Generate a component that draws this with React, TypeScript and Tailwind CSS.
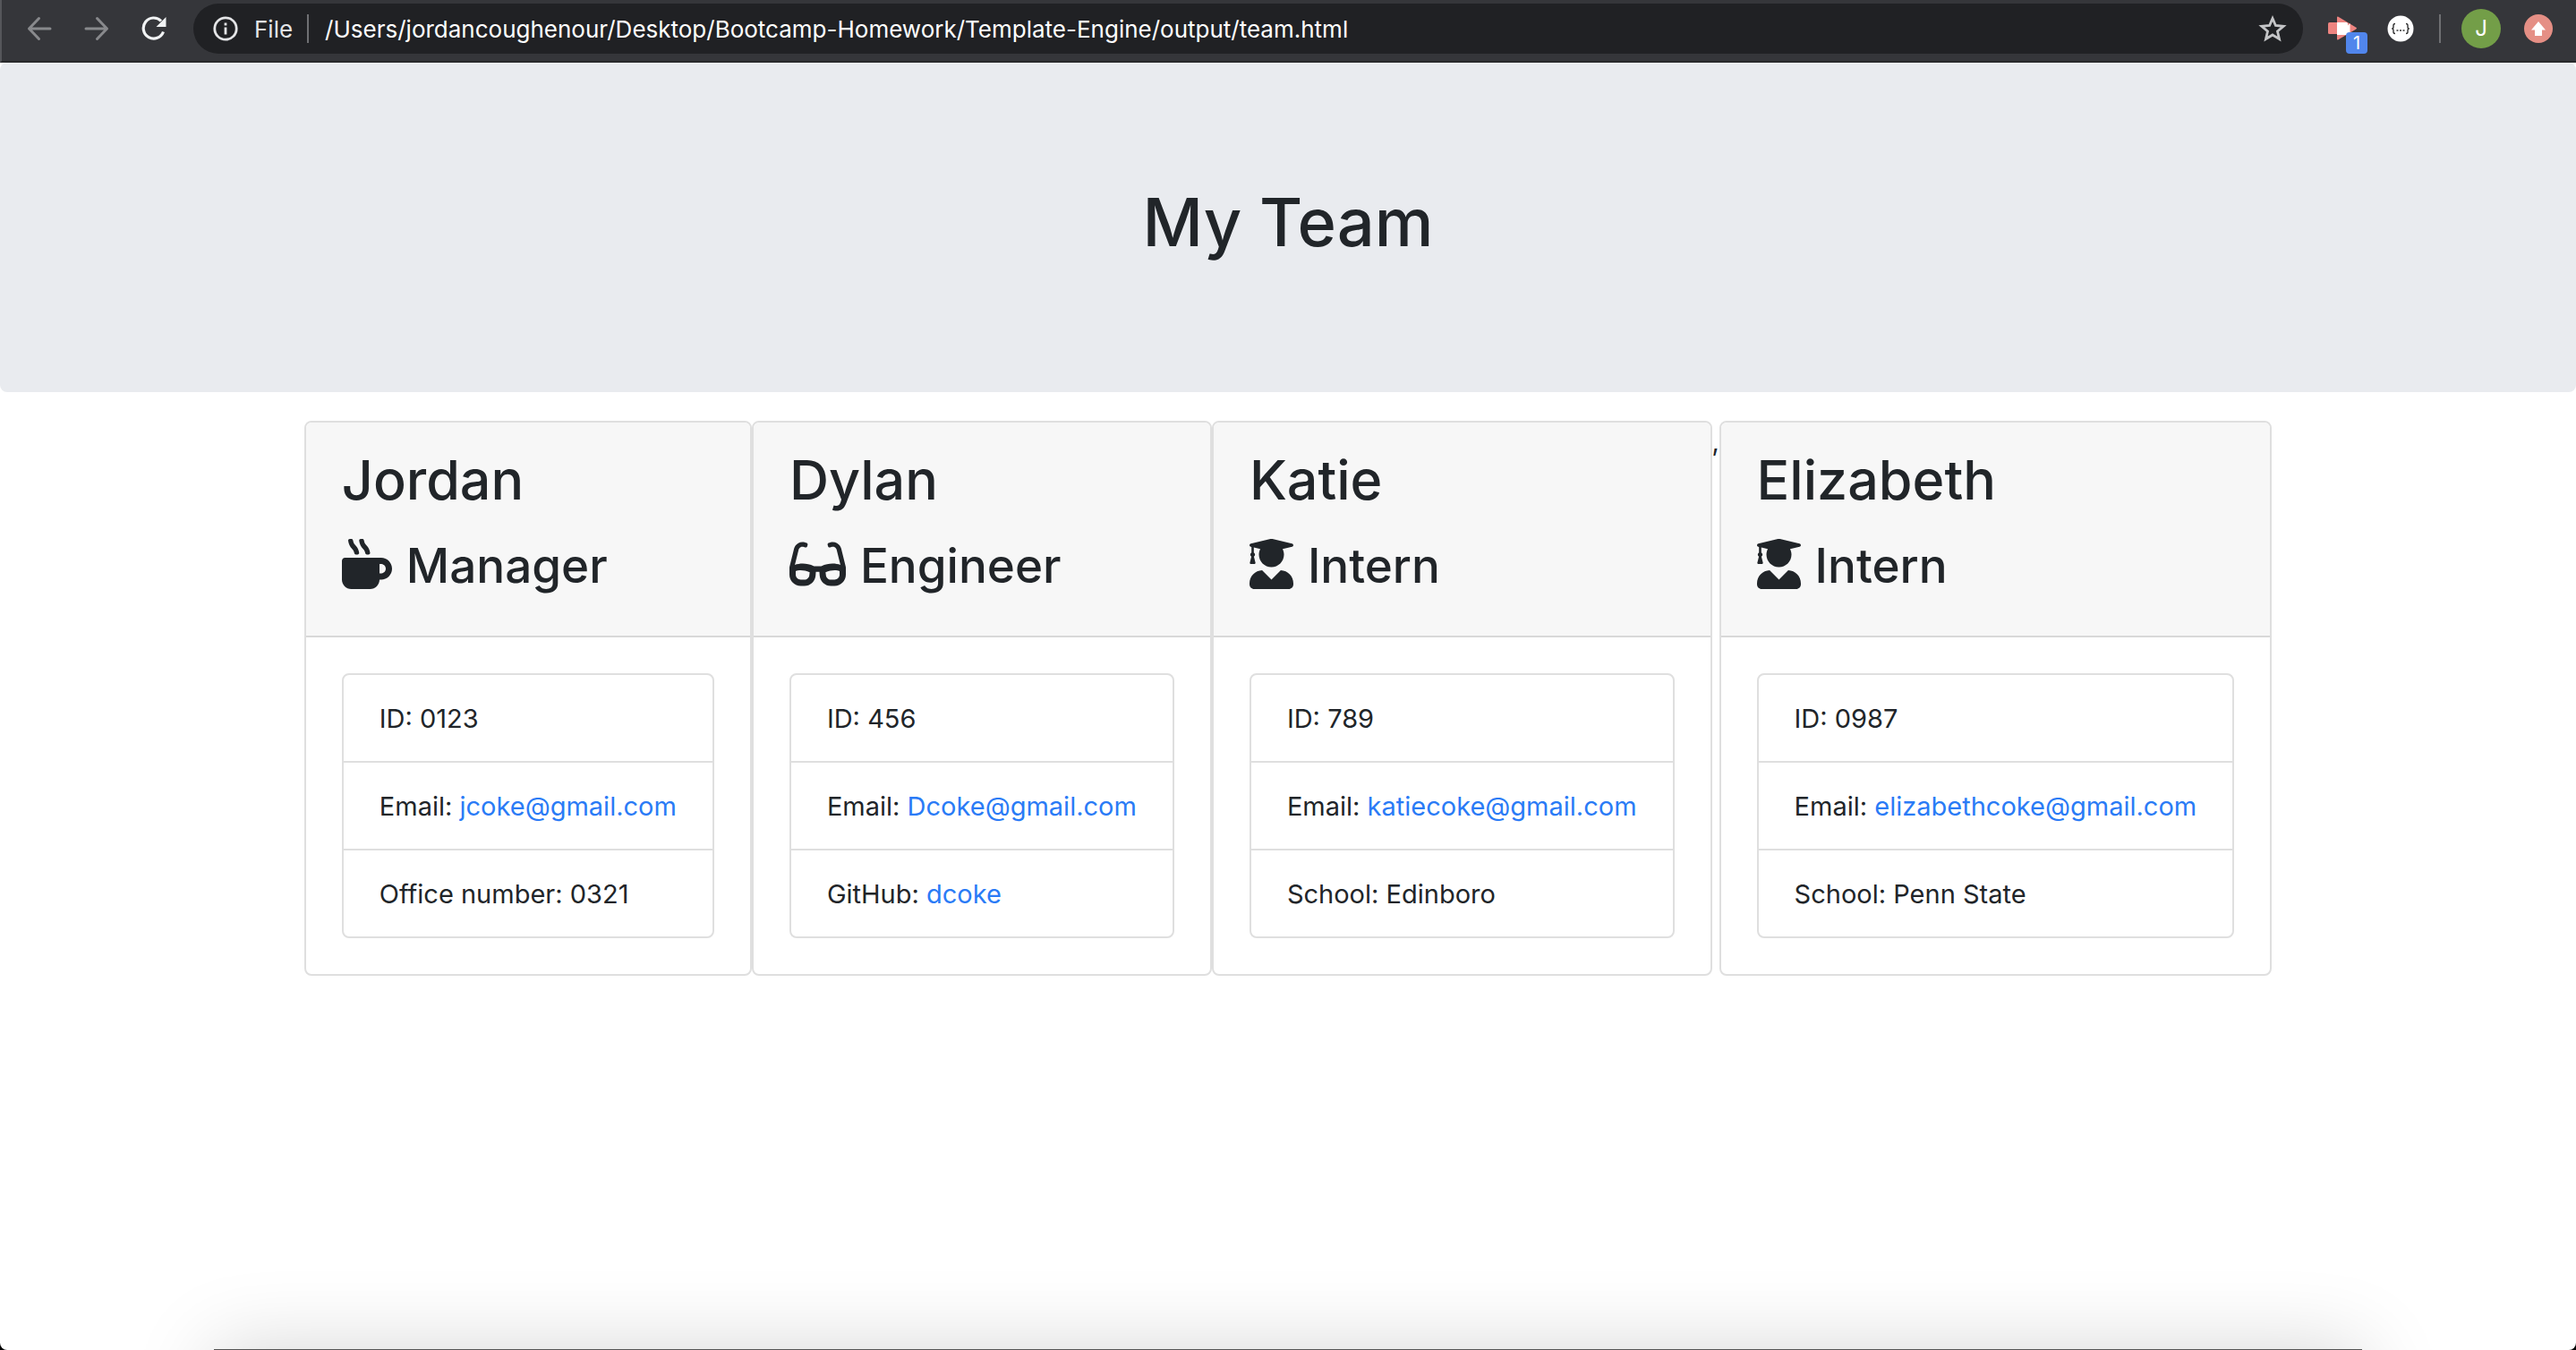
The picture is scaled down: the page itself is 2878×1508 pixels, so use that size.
import type { ReactNode } from "react";
import { FaMugHot, FaUserGraduate } from "react-icons/fa";

type Detail = { label: string; value: string; href?: string };
type Member = {
  name: string;
  role: string;
  icon: ReactNode;
  width: string;
  details: Detail[];
};

function Glasses() {
  return (
    <svg viewBox="0 0 576 512" className="mb-1 h-14 w-[63px] shrink-0" fill="currentColor" aria-hidden="true">
      <path d="M574.1 280.37L528.75 98.66c-5.91-23.7-21.59-44.05-43-55.81-21.44-11.73-46.97-14.11-70.19-6.33l-15.25 5.08c-8.39 2.79-12.92 11.86-10.12 20.24l5.06 15.18c2.79 8.38 11.85 12.91 20.23 10.12l13.18-4.39c10.87-3.62 23-3.57 33.16 1.73 10.29 5.37 17.57 14.56 20.37 25.82l38.46 153.82c-22.19-6.81-49.79-12.46-81.2-12.46-34.77 0-73.98 7.02-114.85 26.74h-73.18c-40.87-19.74-80.08-26.75-114.86-26.75-31.42 0-59.02 5.65-81.21 12.46l38.46-153.83c2.79-11.25 10.09-20.45 20.38-25.81 10.16-5.3 22.28-5.35 33.15-1.73l13.17 4.39c8.38 2.79 17.44-1.74 20.23-10.12l5.06-15.18c2.8-8.38-1.73-17.45-10.12-20.24l-15.25-5.08c-23.22-7.78-48.75-5.41-70.19 6.33-21.41 11.77-37.09 32.11-43 55.81L1.9 280.37A64.218 64.218 0 0 0 0 295.86v70.25C0 429.01 51.58 480 115.2 480h37.12c60.28 0 110.37-45.94 114.88-105.37l2.93-38.63h35.75l2.93 38.63C313.31 434.06 363.4 480 423.68 480h37.12c63.62 0 115.2-50.99 115.2-113.88v-70.25c0-5.23-.64-10.43-1.9-15.5zM203.400 369.800c-1.970 25.910-24.400 46.200-51.080 46.200H115.200C86.970 416 64 393.620 64 366.110v-37.540c12.120-4.310 29.630-8.570 51.500-8.570 29.520 0 60.400 7.500 91.500 20.500zm308.600-3.690c0 27.510-22.970 49.890-51.200 49.890h-37.120c-26.670 0-49.100-20.290-51.070-46.200l-3.620-29.300c31.100-13 61.990-20.500 91.500-20.500 21.890 0 39.400 4.260 51.510 8.560z" />
    </svg>
  );
}

const members: Member[] = [
  {
    name: "Jordan",
    role: "Manager",
    icon: <FaMugHot className="mb-1 h-14 w-14 shrink-0" />,
    width: "min-w-[500px]",
    details: [
      { label: "ID", value: "0123" },
      { label: "Email", value: "jcoke@gmail.com", href: "mailto:jcoke@gmail.com" },
      { label: "Office number", value: "0321" },
    ],
  },
  {
    name: "Dylan",
    role: "Engineer",
    icon: <Glasses />,
    width: "min-w-[513px]",
    details: [
      { label: "ID", value: "456" },
      { label: "Email", value: "Dcoke@gmail.com", href: "mailto:Dcoke@gmail.com" },
      { label: "GitHub", value: "dcoke", href: "https://github.com/dcoke" },
    ],
  },
  {
    name: "Katie",
    role: "Intern",
    icon: <FaUserGraduate className="mb-1 h-14 w-[49px] shrink-0" />,
    width: "min-w-[556px]",
    details: [
      { label: "ID", value: "789" },
      { label: "Email", value: "katiecoke@gmail.com", href: "mailto:katiecoke@gmail.com" },
      { label: "School", value: "Edinboro" },
    ],
  },
  {
    name: "Elizabeth",
    role: "Intern",
    icon: <FaUserGraduate className="mb-1 h-14 w-[49px] shrink-0" />,
    width: "min-w-[617px]",
    details: [
      { label: "ID", value: "0987" },
      { label: "Email", value: "elizabethcoke@gmail.com", href: "mailto:elizabethcoke@gmail.com" },
      { label: "School", value: "Penn State" },
    ],
  },
];

function Toolbar() {
  return (
    <header className="flex h-[70px] items-center border-b-2 border-l-2 border-b-[#28292b] border-l-[#55565a] bg-[#35363a] pr-[26px] pb-1 pl-7 text-[26px] text-white">
      <button aria-label="Back" className="mr-9 text-[#88898c]">
        <svg viewBox="0 0 28 28" className="size-7" fill="none" stroke="currentColor" strokeWidth="3" strokeLinecap="round" strokeLinejoin="round">
          <path d="M26 14H2.500M13.500 2.500 2.500 14l11 11.500" />
        </svg>
      </button>
      <button aria-label="Forward" className="mr-9 text-[#88898c]">
        <svg viewBox="0 0 28 28" className="size-7" fill="none" stroke="currentColor" strokeWidth="3" strokeLinecap="round" strokeLinejoin="round">
          <path d="M2 14h23.500M14.500 2.500l11 11.500-11 11.500" />
        </svg>
      </button>
      <button aria-label="Reload" className="mr-[30px] text-[#f1f3f4]">
        <svg viewBox="0 0 28 28" className="size-7" fill="none">
          <path d="M24.500 17.500A11.500 11.500 0 1 1 22 5.500" stroke="currentColor" strokeWidth="3.200" />
          <path d="M27.500 1v11H16.500z" fill="currentColor" />
        </svg>
      </button>
      <div className="flex h-14 flex-1 items-center rounded-full bg-[#202124] pr-[18px] pl-[22px]">
        <button aria-label="View site information" className="mr-4 flex items-center gap-[18px] text-[#e4e5e7]">
          <svg viewBox="0 0 28 28" className="size-7" fill="none" stroke="currentColor" strokeWidth="2.800">
            <circle cx="14" cy="14" r="12.200" />
            <path d="M14 12.500v8M14 7.500v3" />
          </svg>
          File
        </button>
        <span className="h-8 w-0.5 bg-[#6f7073]" />
        <input
          aria-label="Address"
          readOnly
          className="mx-[18px] min-w-0 flex-1 bg-transparent text-white outline-none"
          value="/Users/jordancoughenour/Desktop/Bootcamp-Homework/Template-Engine/output/team.html"
        />
        <button aria-label="Bookmark this page" className="text-[#c4c5c7]">
          <svg viewBox="0 0 32 32" className="size-8" fill="none" stroke="currentColor" strokeWidth="2.800">
            <path d="m16 4.500 3.400 8 8.800.8-6.700 5.700 2 8.500-7.500-4.500-7.500 4.500 2-8.500-6.700-5.700 8.800-.8z" />
          </svg>
        </button>
      </div>
      <button aria-label="Video extension, 1 notification" className="relative mr-[34px] ml-7">
        <svg viewBox="0 0 32 28" className="h-7 w-8">
          <path d="M1.500 7H10v13H1.500Q0 20 0 18.500v-10Q0 7 1.500 7z" fill="#ee8480" />
          <path d="M10 1.500Q10 0 11.500.8L31 12.500q2 1 0 2.200L11.500 26.200Q10 27 10 25.500z" fill="#ee8480" />
          <path d="M10 7h10.500q1.500 0 1.500 1.500v2L24.500 8v13H10z" fill="#fff" />
        </svg>
        <span className="absolute top-[18px] left-5 flex size-6 items-center justify-center rounded bg-[#5186ec] text-xl leading-6">
          1
        </span>
      </button>
      <button aria-label="JSON viewer extension">
        <svg viewBox="0 0 30 30" className="size-[30px]" fill="none" stroke="#333" strokeWidth="1.400">
          <circle cx="15" cy="15" r="14.500" fill="#fff" stroke="none" />
          <path d="M9 9.500q-2 0-2 1.800v1.900q0 1.800-1.800 1.800Q7 15 7 16.800v1.900q0 1.800 2 1.800M21 9.500q2 0 2 1.800v1.900q0 1.800 1.800 1.800-1.800 0-1.800 1.800v1.900q0 1.800-2 1.800" />
          <path d="M10.500 17h2M14 17h2M17.500 17h2" />
        </svg>
      </button>
      <span className="mr-[23px] ml-7 h-8 w-0.5 bg-[#6f7073]" />
      <button aria-label="Profile" className="mr-[26px] flex size-11 items-center justify-center rounded-full bg-[#739e48] text-2xl">
        J
      </button>
      <button aria-label="Update">
        <svg viewBox="0 0 32 32" className="size-8">
          <circle cx="16" cy="16" r="16" fill="#e58f85" />
          <path d="m16 8 8 9.500h-4V24h-8v-6.500H8z" fill="#fff" />
        </svg>
      </button>
    </header>
  );
}

function MemberCard({ member }: { member: Member }) {
  return (
    <article className={`rounded-lg border-2 border-[#dfdfdf] bg-white ${member.width}`}>
      <div className="rounded-t-md border-b-2 border-[#d8d8d8] bg-[#f7f7f7] px-10 pt-[26px] pb-11 font-medium">
        <h2 className="text-[61px] leading-[76px]">{member.name}</h2>
        <h3 className="mt-6 flex items-center gap-4 text-[53px] leading-[68px]">
          {member.icon}
          {member.role}
        </h3>
      </div>
      <div className="p-10">
        <ul className="divide-y-2 divide-[#dfdfdf] rounded-lg border-2 border-[#dfdfdf] text-[29px] leading-[48px]">
          {member.details.map((detail) => (
            <li key={detail.label} className="px-10 pt-[25px] pb-[23px] whitespace-nowrap">
              {detail.label}:{" "}
              {detail.href ? (
                <a href={detail.href} className="text-[#2a7bf6]">
                  {detail.value}
                </a>
              ) : (
                detail.value
              )}
            </li>
          ))}
        </ul>
      </div>
    </article>
  );
}

export default function App() {
  return (
    <div className="bg-black font-['Inter',sans-serif] text-[#212529]">
      <div className="relative flex min-h-screen flex-col overflow-hidden rounded-b-lg bg-white">
        <Toolbar />
        <div className="mb-8 rounded-lg bg-[#e9ebef] pt-[130px] pb-[142px]">
          <h1 className="text-center text-[74px] leading-[96px] font-medium">My Team</h1>
        </div>
        <main className="flex justify-center">
          <MemberCard member={members[0]} />
          <MemberCard member={members[1]} />
          <MemberCard member={members[2]} />
          <span className="w-2 text-[29px] leading-[48px]">,</span>
          <MemberCard member={members[3]} />
        </main>
        <div className="absolute inset-x-[239px] top-full -mt-px h-40 bg-[#555] shadow-[0_0_90px_rgba(0,0,0,0.17)]" />
      </div>
    </div>
  );
}
